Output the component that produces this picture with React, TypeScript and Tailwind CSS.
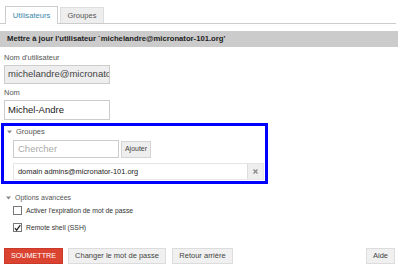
import React from "react";

function Caret() {
  return (
    <svg width="5" height="4" viewBox="0 0 5 4" className="shrink-0">
      <path d="M0 0.5 L5 0.5 L2.5 3.5 Z" fill="#888" />
    </svg>
  );
}

function Checkbox({ checked }: { checked?: boolean }) {
  return (
    <span className="w-[9px] h-[9px] border border-[#777] bg-white flex items-center justify-center shrink-0">
      {checked && (
        <svg width="8" height="8" viewBox="0 0 8 8">
          <path d="M1 4.2 L3 6.5 L7.2 0.8" stroke="#222" strokeWidth="1.4" fill="none" />
        </svg>
      )}
    </span>
  );
}

export default function App() {
  return (
    <div
      className="w-[400px] h-[271px] bg-white overflow-hidden text-[#333]"
      style={{ fontFamily: '"Liberation Sans", Arial, sans-serif' }}
    >
      {/* Tabs */}
      <div className="flex items-end gap-[2px] pl-[5px] pt-[6px] mr-[4px] border-b border-[#ccc] h-[24px]">
        <div className="h-[18px] w-[53px] border border-b-0 border-[#ccc] bg-white -mb-px flex items-center justify-center text-[7.6px] text-[#3a87ad]">
          Utilisateurs
        </div>
        <div className="h-[16px] w-[44px] border border-b-0 border-[#ddd] bg-[#eee] flex items-center justify-center text-[7.6px] text-[#555]">
          Groupes
        </div>
      </div>

      {/* Header */}
      <div className="mt-[7px] mr-[2px] h-[16px] bg-[#cbcbcb] flex items-center pl-[7px] text-[7.7px] font-bold text-[#222]">
        Mettre à jour l'utilisateur `michelandre@micronator-101.org'
      </div>

      {/* Fields */}
      <div className="pl-[4px] pt-[6px] flex flex-col">
        <label className="text-[7.5px] text-[#555] leading-[9px]">Nom d'utilisateur</label>
        <div className="mt-[3px] w-[106px] h-[19px] border border-[#ccc] bg-[#eee] flex items-center pl-[3px] overflow-hidden whitespace-nowrap text-[9.5px] text-[#444]">
          michelandre@micronator-101.org
        </div>
        <label className="mt-[4px] text-[7.5px] text-[#555] leading-[9px]">Nom</label>
        <div className="mt-[3px] w-[106px] h-[20px] border border-[#ccc] bg-white flex items-center pl-[3px] text-[9.5px] text-[#222]">
          Michel-Andre
        </div>
      </div>

      {/* Groups section */}
      <div className="mt-[3px] ml-[1px] w-[267px] h-[61px] border-[3px] border-[#0000ff] flex flex-col">
        <div className="flex items-center gap-[4px] pl-[3px] pt-[1px] text-[7.5px] text-[#555] leading-[9px]">
          <Caret />
          <span>Groupes</span>
        </div>
        <div className="flex items-center gap-[2px] pl-[9px] mt-[4px]">
          <div className="w-[106px] h-[18px] border border-[#ccc] bg-white flex items-center pl-[4px] text-[9.5px] text-[#aaa]">
            Chercher
          </div>
          <button className="w-[30px] h-[17px] border border-[#d4d4d4] bg-[#eee] text-[7px] text-[#444] flex items-center justify-center">
            Ajouter
          </button>
        </div>
        <div className="mt-[5px] ml-[9px] w-[251px] h-[17px] border border-[#e6e6e6] flex items-center">
          <span className="flex-1 pl-[4px] text-[7.4px] text-[#222]">
            domain admins@micronator-101.org
          </span>
          <span className="w-[16px] h-full bg-[#eee] border-l border-[#ddd] flex items-center justify-center">
            <svg width="5" height="5" viewBox="0 0 5 5">
              <path d="M0.5 0.5 L4.5 4.5 M4.5 0.5 L0.5 4.5" stroke="#888" strokeWidth="1.3" />
            </svg>
          </span>
        </div>
      </div>

      {/* Advanced options */}
      <div className="flex items-center gap-[4px] pl-[6px] mt-[9px] text-[7px] text-[#555] leading-[9px]">
        <Caret />
        <span>Options avancées</span>
      </div>
      <div className="flex flex-col gap-[8px] pl-[13px] mt-[4px]">
        <div className="flex items-center gap-[4px] text-[6.8px] text-[#333] leading-[9px]">
          <Checkbox />
          <span>Activer l'expiration de mot de passe</span>
        </div>
        <div className="flex items-center gap-[4px] text-[6.8px] text-[#333] leading-[9px]">
          <Checkbox checked />
          <span>Remote shell (SSH)</span>
        </div>
      </div>

      {/* Buttons */}
      <div className="flex items-center pl-[4px] pr-[5px] mt-[16px]">
        <button className="w-[59px] h-[16px] bg-[#d9432f] border border-[#c9382a] text-white text-[7.2px] flex items-center justify-center">
          SOUMETTRE
        </button>
        <button className="ml-[5px] w-[98px] h-[16px] bg-[#f0f0f0] border border-[#dcdcdc] text-[#444] text-[7.5px] flex items-center justify-center">
          Changer le mot de passe
        </button>
        <button className="ml-[6px] w-[61px] h-[16px] bg-[#f0f0f0] border border-[#dcdcdc] text-[#444] text-[7.5px] flex items-center justify-center">
          Retour arrière
        </button>
        <div className="flex-1" />
        <button className="w-[29px] h-[16px] bg-[#f0f0f0] border border-[#dcdcdc] text-[#444] text-[7.5px] flex items-center justify-center">
          Aide
        </button>
      </div>
    </div>
  );
}
